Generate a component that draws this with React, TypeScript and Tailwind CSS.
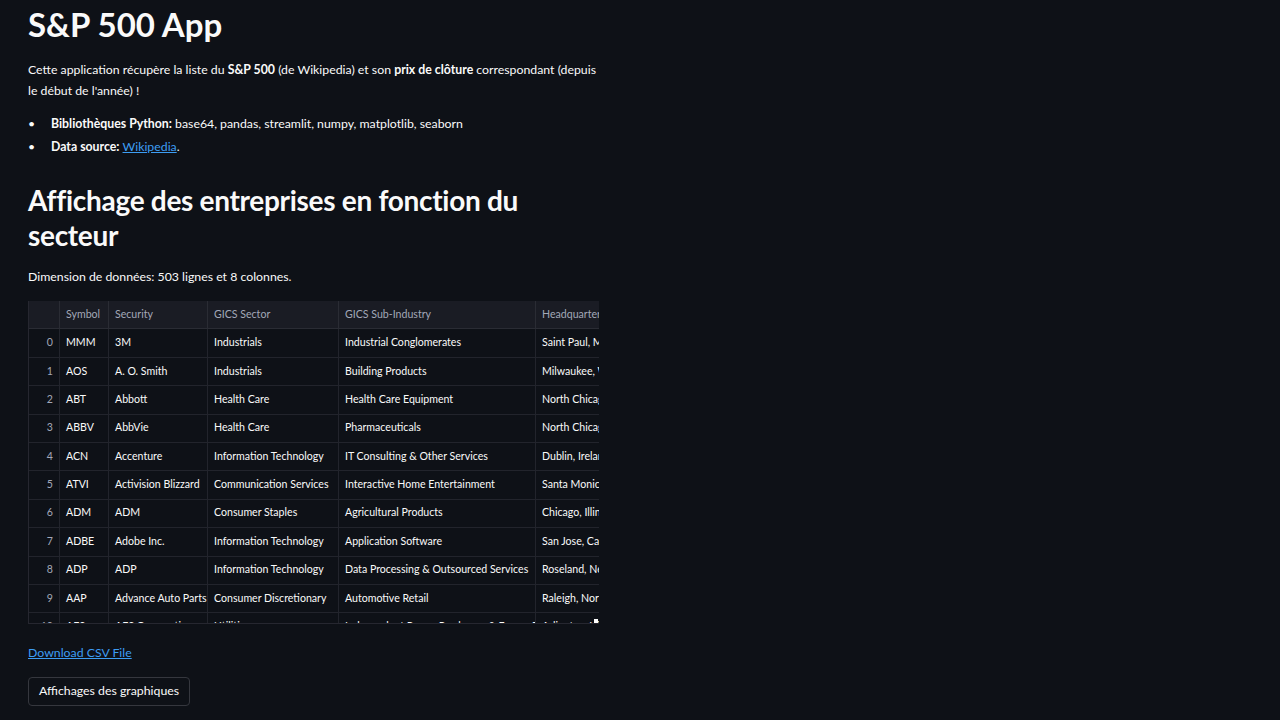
import React from "react";

const rows = [
  ["MMM", "3M", "Industrials", "Industrial Conglomerates", "Saint Paul, Minnesota"],
  ["AOS", "A. O. Smith", "Industrials", "Building Products", "Milwaukee, Wisconsin"],
  ["ABT", "Abbott", "Health Care", "Health Care Equipment", "North Chicago, Illinois"],
  ["ABBV", "AbbVie", "Health Care", "Pharmaceuticals", "North Chicago, Illinois"],
  ["ACN", "Accenture", "Information Technology", "IT Consulting & Other Services", "Dublin, Ireland"],
  ["ATVI", "Activision Blizzard", "Communication Services", "Interactive Home Entertainment", "Santa Monica, California"],
  ["ADM", "ADM", "Consumer Staples", "Agricultural Products", "Chicago, Illinois"],
  ["ADBE", "Adobe Inc.", "Information Technology", "Application Software", "San Jose, California"],
  ["ADP", "ADP", "Information Technology", "Data Processing & Outsourced Services", "Roseland, New Jersey"],
  ["AAP", "Advance Auto Parts", "Consumer Discretionary", "Automotive Retail", "Raleigh, North Carolina"],
  ["AES", "AES Corporation", "Utilities", "Independent Power Producers & Energy Traders", "Arlington, Virginia"],
];

const widths = ["w-[31px]", "w-[49px]", "w-[99px]", "w-[131px]", "w-[197px]", "w-[160px]"];

export default function App() {
  return (
    <div
      className="min-h-[720px] w-full bg-[#0e1117] text-[#fafafa]"
      style={{ fontFamily: "Lato, 'Noto Sans', sans-serif" }}
    >
      <div className="w-[572px] ml-[28px] pt-[4px]">
        <h1 className="text-[33px] font-bold leading-[40px]">S&amp;P 500 App</h1>
        <p className="mt-[15px] text-[12.3px] leading-[21px]">
          Cette application récupère la liste du <b>S&amp;P 500</b> (de Wikipedia) et son <b>prix de clôture</b> correspondant (depuis le début de l'année) !
        </p>
        <ul className="mt-[11px] text-[12.3px] leading-[23px]">
          <li className="flex">
            <span className="w-[23px]">•</span>
            <span><b>Bibliothèques Python:</b> base64, pandas, streamlit, numpy, matplotlib, seaborn</span>
          </li>
          <li className="flex">
            <span className="w-[23px]">•</span>
            <span>
              <b>Data source:</b>{" "}
              <a className="text-[#3d9df3] underline" href="#">Wikipedia</a>.
            </span>
          </li>
        </ul>
        <h2 className="mt-[25px] text-[28px] font-bold leading-[35px] tracking-[-0.3px]">
          Affichage des entreprises en fonction du secteur
        </h2>
        <p className="mt-[13px] text-[12.3px] leading-[21px]">Dimension de données: 503 lignes et 8 colonnes.</p>

        <div className="relative mt-[14px] h-[322px] w-[571px] overflow-hidden border-l border-[#262730] text-[10.6px]">
          <div className="flex h-[28.4px] bg-[#1a1c24] text-[#a3a8b8]">
            {["", "Symbol", "Security", "GICS Sector", "GICS Sub-Industry", "Headquarters Location"].map((h, i) => (
              <div key={i} className={`${widths[i]} shrink-0 border-r border-b border-[#2a2c34] px-[6px] flex items-center whitespace-nowrap overflow-hidden`}>
                {h}
              </div>
            ))}
          </div>
          {rows.map((r, ri) => (
            <div key={ri} className="flex h-[28.4px]">
              <div className={`${widths[0]} shrink-0 border-r border-b border-[#22242c] bg-[#0e1117] px-[6px] flex items-center justify-end text-[#a3a8b8]`}>
                {ri}
              </div>
              {r.map((c, ci) => (
                <div key={ci} className={`${widths[ci + 1]} shrink-0 border-r border-b border-[#22242c] px-[6px] flex items-center whitespace-nowrap overflow-hidden`}>
                  {c}
                </div>
              ))}
            </div>
          ))}
          <div className="absolute right-[1px] bottom-0 h-[4px] w-[4px] bg-white" />
        </div>
        <div className="h-px w-[571px] bg-[#262730]" />

        <a href="#" className="mt-[20px] inline-block text-[12.3px] leading-[17px] text-[#3d9df3] underline">Download CSV File</a>
        <div className="mt-[14px]">
          <button className="h-[29px] rounded-[4px] border border-[#35373e] bg-[#0e1117] px-[10px] text-[12.3px] text-[#fafafa]">
            Affichages des graphiques
          </button>
        </div>
      </div>
    </div>
  );
}
